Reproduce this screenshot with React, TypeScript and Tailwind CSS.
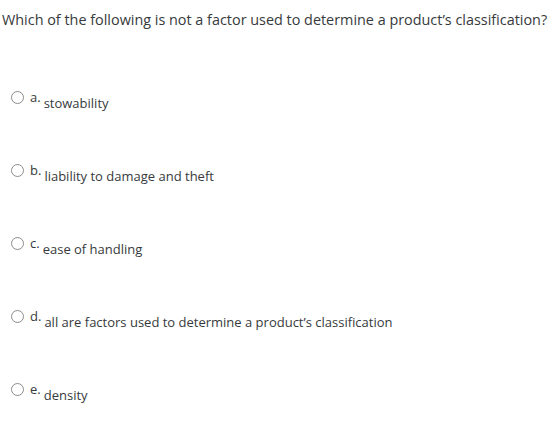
const options = [
  { key: "a.", text: "stowability" },
  { key: "b.", text: "liability to damage and theft" },
  { key: "c.", text: "ease of handling" },
  { key: "d.", text: "all are factors used to determine a product\u2019s classification" },
  { key: "e.", text: "density" },
];

export default function App() {
  return (
    <div className="h-[426px] w-[550px] overflow-hidden bg-white font-['Open_Sans',sans-serif] text-[#373a3c]">
      <p className="pl-[2px] pt-[10px] text-[14.4px] leading-5">
        Which of the following is not a factor used to determine a product&rsquo;s classification?
      </p>
      <div className="mt-[61px] flex flex-col gap-[54px] pl-[11px]">
        {options.map((o) => (
          <div key={o.key} className="flex items-start">
            <span className="h-[13px] w-[13px] shrink-0 rounded-full border border-[#8c8c8c] bg-white" />
            <span className="ml-[6px] text-[13px] leading-[13px]">{o.key}</span>
            <span className="ml-[3px] mt-[6px] text-[13px] leading-[13px]">{o.text}</span>
          </div>
        ))}
      </div>
    </div>
  );
}
